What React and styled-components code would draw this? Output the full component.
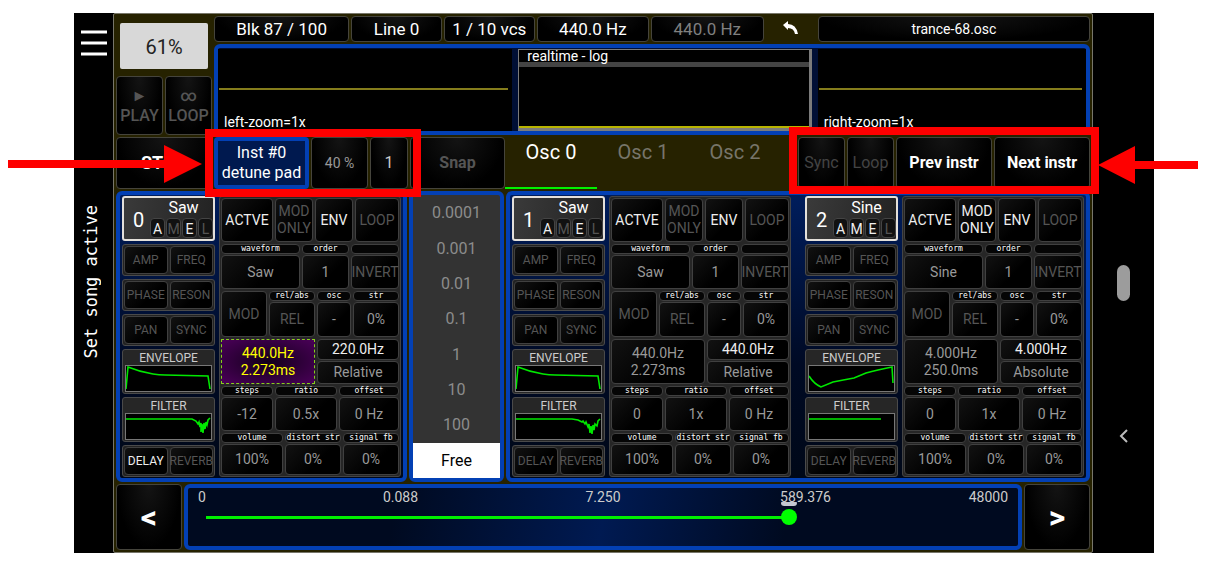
import React, { useState } from "react";
import styled, { createGlobalStyle } from "styled-components";

const GlobalStyle = createGlobalStyle`
  * {
    box-sizing: border-box;
  }
  body {
    margin: 0;
    background: #fff;
    font-family: Roboto, "Liberation Sans", sans-serif;
  }
  button {
    font-family: inherit;
    margin: 0;
    padding: 0;
    white-space: nowrap;
    cursor: pointer;
  }
`;

const Phone = styled.div`
  display: flex;
  margin: 13px 74px 14px;
  background: #000;
`;

const SideBar = styled.aside`
  display: flex;
  flex-direction: column;
  align-items: center;
  width: 39px;
  padding-top: 16px;
`;

const MenuButton = styled.button`
  border: none;
  background: none;
  height: 30px;
`;

const SideText = styled.div`
  margin-top: 146px;
  padding-left: 6px;
  writing-mode: vertical-rl;
  transform: rotate(180deg);
  color: #fff;
  font-family: "DejaVu Sans Mono", monospace;
  font-size: 17px;
  line-height: 20px;
  white-space: nowrap;
`;

const NavBar = styled.nav`
  display: flex;
  flex-direction: column;
  align-items: center;
  width: 61px;
  padding-top: 252px;
`;

const NavPill = styled.div`
  width: 13px;
  height: 36px;
  border-radius: 7px;
  background: #9c9c9c;
`;

const NavBack = styled.button`
  margin-top: 128px;
  border: none;
  background: none;
  height: 16px;
`;

const Main = styled.main`
  flex: 1;
  min-width: 0;
  display: flex;
  flex-direction: column;
  gap: 2px;
  padding: 2px;
  border: 1px solid #77766a;
  border-radius: 2px;
  background: #262200;
`;

const Row = styled.div`
  display: flex;
  gap: 2px;
`;

const Key = styled.button`
  flex: ${(p) => p.$grow || 0} 1 ${(p) => p.$w || 0}px;
  min-width: 0;
  height: ${(p) => p.$h || 52}px;
  border: 1px solid #45443c;
  border-radius: 4px;
  background: radial-gradient(ellipse at 50% 0%, #141414, #000 70%);
  color: ${(p) => p.$color || "#fff"};
  font-size: ${(p) => p.$size || 16}px;
  font-weight: ${(p) => p.$weight || 400};
  line-height: 20px;
`;

const InstKey = styled(Key)`
  border: 4px solid #0340b4;
  background: #00194f;
`;

const Transport = styled.div`
  flex: 0 0 96px;
  display: flex;
  flex-direction: column;
`;

const Load = styled.div`
  height: 46px;
  margin: 7px 4px;
  border-radius: 2px;
  background: #d8d8d8;
  color: #222;
  font-size: 20px;
  line-height: 48px;
  text-align: center;
`;

const Top = styled.div`
  flex: 1;
  min-width: 0;
  display: flex;
  flex-direction: column;
  gap: 2px;
`;

const UndoButton = styled.button`
  flex: 51 1 0;
  border: none;
  background: none;
`;

const Scopes = styled.div`
  display: grid;
  grid-template-columns: 294fr 293fr 268fr;
  gap: 6px;
  height: 91px;
  padding: 1px 0 0;
  border: 4px solid #0340b4;
  border-radius: 6px;
  background: #000f35;
`;

const Scope = styled.div`
  display: flex;
  flex-direction: column;
  justify-content: flex-end;
  padding: 0 4px 0 1px;
  background: #000;
  color: #fff;
  font-size: 14px;
  line-height: 18px;
`;

const Wave = styled.div`
  height: 2px;
  margin-bottom: 23px;
  background: #857d1c;
`;

const ScopeLabel = styled.div`
  padding-left: 5px;
`;

const Spectrum = styled.div`
  display: flex;
  flex-direction: column;
  justify-content: space-between;
  border: 2px solid #7b7b7b;
  border-width: 1px 3px 3px 1px;
  background: #000;
  color: #fff;
  font-size: 14px;
  line-height: 12px;
`;

const SpectrumTitle = styled.div`
  padding-left: 8px;
  border-bottom: 5px solid #444;
`;

const Floor = styled.div`
  height: 2px;
  background: #b8b400;
`;

const Marked = styled.div`
  position: relative;
  flex: 0 1 ${(p) => p.$w}px;
  display: flex;
  gap: 2px;
`;

/* red box and arrow lying over the toolbar */
const Callout = styled.div`
  position: absolute;
  inset: ${(p) => p.$inset};
  border: 8px solid #fe0000;
  pointer-events: none;
`;

const Arrow = styled.svg`
  position: absolute;
  top: ${(p) => p.$top}px;
  ${(p) => p.$side}: 100%;
  margin-${(p) => p.$side}: ${(p) => p.$gap}px;
`;

const Tabs = styled.div`
  flex: 1;
  display: flex;
  margin-left: -2px;
`;

const Tab = styled.button`
  width: 92px;
  height: 52px;
  padding-bottom: 20px;
  border: none;
  border-bottom: 2px solid ${(p) => (p.$on ? "#00f000" : "transparent")};
  background: none;
  color: ${(p) => (p.$on ? "#fff" : "#77756a")};
  font-size: 20px;
`;

const Deck = styled.div`
  display: grid;
  grid-template-columns: 291fr 95fr 584fr;
  gap: 2px;
`;

const Panel = styled.section`
  min-width: 0;
  display: flex;
  gap: 14px;
  padding: 1px 2px;
  border: 4px solid #0340b4;
  border-radius: 6px;
  background: linear-gradient(#001d5c, #000a24 60%, #000818);
`;

const Picker = styled.div`
  display: flex;
  flex-direction: column;
  border: 4px solid #0340b4;
  border-radius: 6px;
  background: #333;
`;

const PickerItem = styled.button`
  flex: 1;
  border: none;
  background: ${(p) => (p.$on ? "#fff" : "none")};
  color: ${(p) => (p.$on ? "#000" : "#8c8c8c")};
  font-size: 16px;
  line-height: 20px;
  padding-top: 1px;
`;

const OscBox = styled.div`
  flex: 1;
  min-width: 0;
  display: grid;
  grid-template-columns: 93fr 182fr;
  gap: 4px;
`;

const LeftCol = styled.div`
  min-width: 0;
  display: flex;
  flex-direction: column;
  gap: 3px;
`;

const OscHead = styled.div`
  display: flex;
  height: 45px;
  border: 2px solid #e4e0da;
  border-radius: 3px;
  background: linear-gradient(100deg, #3a3a3a, #222);
  color: #fff;
`;

const OscNumber = styled.div`
  flex: 1;
  padding-left: 3px;
  text-align: center;
  font-size: 20px;
  line-height: 44px;
`;

const OscInfo = styled.div`
  width: 63px;
  font-size: 16px;
  line-height: 20px;
  text-align: center;
`;

const OscName = styled.div`
  padding-left: 4px;
`;

const Flags = styled.div`
  display: flex;
  gap: 1px;
`;

const Flag = styled.span`
  flex: 1;
  height: 20px;
  border: 1px solid #444;
  border-radius: 4px;
  background: #111;
  color: ${(p) => (p.$on ? "#eee" : "#555")};
  font-size: 14px;
  line-height: 20px;
`;

const Pair = styled.div`
  display: grid;
  grid-template-columns: 1fr 1fr;
  gap: 2px;
  height: 32px;
  padding: 1px;
  border: 1px solid #4a4a4a;
  border-radius: 3px;
  background: #222;
`;

const tones = { hi: "#eee", mid: "#999", low: "#555" };

const Cell = styled.button`
  display: flex;
  align-items: center;
  justify-content: center;
  min-width: 0;
  border: 1px solid #404040;
  border-radius: 4px;
  background: linear-gradient(135deg, #121212, #000 60%);
  color: ${(p) => tones[p.$tone || "mid"]};
  font-size: ${(p) => p.$size || 14}px;
  line-height: 17px;
`;

const HotCell = styled(Cell)`
  border: 1px dashed #86d01c;
  border-radius: 0;
  background: radial-gradient(ellipse, #12001a, #4a0058);
  color: #ffff00;
`;

const Graph = styled.div`
  height: 45px;
  padding: 1px 2px 2px;
  border: 1px solid #4a4a4a;
  border-radius: 3px;
  background: #262626;
  color: #ccc;
  font-size: 12px;
  line-height: 14px;
  text-align: center;
`;

const Plot = styled.svg`
  display: block;
  width: 100%;
  height: 27px;
  border: 1px solid #777;
  background: #000;
`;

const Controls = styled.div`
  min-width: 0;
  display: grid;
  grid-template-rows: 44px 45px 46px 45px 45px 42px;
  gap: 2px;
  padding: 1px;
  border: 1px solid #444;
  border-radius: 3px;
  background: #262626;
`;

const Line = styled.div`
  display: grid;
  grid-template-columns: ${(p) => p.$cols};
  gap: 2px;
`;

const Stack = styled.div`
  min-width: 0;
  display: grid;
  grid-template-rows: ${(p) => p.$rows || "10px 1fr"};
  gap: 1px;
`;

const Caption = styled.div`
  display: flex;
  align-items: center;
  justify-content: center;
  border: 1px solid #404040;
  border-radius: 4px;
  background: #050505;
  color: #fff;
  font-family: "DejaVu Sans Mono", monospace;
  font-size: 8px;
  line-height: 8px;
  white-space: nowrap;
`;

const SliderBox = styled.div`
  flex: 1;
  padding: 0 10px;
  border: 4px solid #0340b4;
  border-radius: 6px;
  background: linear-gradient(100deg, #000a20 25%, #001a52 50%, #000a20 72%);
`;

const Ticks = styled.div`
  display: grid;
  grid-template-columns: 1fr 2fr 2fr 2fr 1fr;
  color: #ccc;
  font-size: 14px;
  line-height: 18px;
  text-align: center;

  span:first-child {
    text-align: left;
  }
  span:last-child {
    text-align: right;
  }
`;

const Track = styled.div`
  position: relative;
`;

const Cap = styled.span`
  position: absolute;
  top: -4px;
  width: 16px;
  height: 4px;
  border-radius: 2px 2px 8px 8px;
  background: #c4c8d0;
`;

const Range = styled.input`
  display: block;
  width: 100%;
  height: 22px;
  margin: 0;
  appearance: none;
  background: linear-gradient(#00f000, #00f000) 8px 50% / var(--fill) 3px no-repeat;

  &::-webkit-slider-thumb {
    appearance: none;
    width: 16px;
    height: 16px;
    border-radius: 50%;
    background: #00ff00;
  }
`;

const ENV_SAW = "M0 23 L2 1 Q14 6 27 8 Q33 9 39 9 L82 10 L84 23";
const ENV_SINE = "M0 10 Q5 18 12 21 L24 16 Q34 14 45 12 L57 7 Q68 4 83 1 L84 17";
const FILTER_A =
  "M0 5 H66 L70 7 72 10 73 8 74 13 75 9 75 18 76 10 77 19 78 9 79 15 80 8 81 11 82 6 84 4";
const FILTER_B =
  "M0 5 H56 L62 6 66 8 67 7 69 10 70 8 72 13 73 10 74 19 75 12 76 20 77 11 78 16 79 10 81 12 82 7 84 5";

const oscs = [
  {
    name: "Saw",
    flags: "AE",
    delay: true,
    hot: true,
    hz: "440.0Hz",
    ms: "2.273ms",
    base: "220.0Hz",
    mode: "Relative",
    steps: "-12",
    ratio: "0.5x",
    env: ENV_SAW,
    filter: FILTER_A,
  },
  {
    name: "Saw",
    flags: "AE",
    hz: "440.0Hz",
    ms: "2.273ms",
    base: "440.0Hz",
    mode: "Relative",
    steps: "0",
    ratio: "1x",
    env: ENV_SAW,
    filter: FILTER_B,
  },
  {
    name: "Sine",
    flags: "AME",
    hz: "4.000Hz",
    ms: "250.0ms",
    base: "4.000Hz",
    mode: "Absolute",
    steps: "0",
    ratio: "1x",
    env: ENV_SINE,
    filter: "M0 5 H72",
  },
];

const Field = ({ label, tone, children }) => (
  <Stack>
    <Caption>{label}</Caption>
    <Cell $tone={tone} aria-label={label}>
      {children}
    </Cell>
  </Stack>
);

const PlotBox = ({ title, d }) => (
  <Graph>
    {title}
    <Plot viewBox="0 0 85 25" preserveAspectRatio="none">
      <path d={d} fill="none" stroke="#00e800" strokeWidth="1.6" />
    </Plot>
  </Graph>
);

const Osc = ({ index }) => {
  const o = oscs[index];
  const Freq = o.hot ? HotCell : Cell;

  return (
    <OscBox>
      <LeftCol>
        <OscHead>
          <OscNumber>{index}</OscNumber>
          <OscInfo>
            <OscName>{o.name}</OscName>
            <Flags>
              {["A", "M", "E", "L"].map((f) => (
                <Flag key={f} $on={o.flags.includes(f)}>
                  {f}
                </Flag>
              ))}
            </Flags>
          </OscInfo>
        </OscHead>
        {[
          ["AMP", "FREQ"],
          ["PHASE", "RESON"],
          ["PAN", "SYNC"],
        ].map(([a, b]) => (
          <Pair key={a}>
            <Cell $tone="low" $size={12}>{a}</Cell>
            <Cell $tone="low" $size={12}>{b}</Cell>
          </Pair>
        ))}
        <PlotBox title="ENVELOPE" d={o.env} />
        <PlotBox title="FILTER" d={o.filter} />
        <Pair>
          <Cell $tone={o.delay ? "hi" : "low"} $size={12}>DELAY</Cell>
          <Cell $tone="low" $size={12}>REVERB</Cell>
        </Pair>
      </LeftCol>
      <Controls>
        <Line $cols="52fr 38fr 38fr 44fr">
          <Cell $tone="hi">ACTVE</Cell>
          <Cell $tone={o.flags.includes("M") ? "hi" : "low"}>
            MOD
            <br />
            ONLY
          </Cell>
          <Cell $tone="hi">ENV</Cell>
          <Cell $tone="low">LOOP</Cell>
        </Line>
        <Line $cols="79fr 47fr 48fr">
          <Field label="waveform">{o.name}</Field>
          <Field label="order">1</Field>
          <Field tone="low">INVERT</Field>
        </Line>
        <Line $cols="46fr 46fr 34fr 46fr">
          <Cell $tone="low">MOD</Cell>
          <Field label="rel/abs" tone="low">REL</Field>
          <Field label="osc">-</Field>
          <Field label="str">0%</Field>
        </Line>
        <Line $cols="94fr 82fr">
          <Freq>
            {o.hz}
            <br />
            {o.ms}
          </Freq>
          <Stack $rows="21px 1fr">
            <Cell $tone="hi">{o.base}</Cell>
            <Cell>{o.mode}</Cell>
          </Stack>
        </Line>
        <Line $cols="52fr 62fr 60fr">
          <Field label="steps">{o.steps}</Field>
          <Field label="ratio">{o.ratio}</Field>
          <Field label="offset">0 Hz</Field>
        </Line>
        <Line $cols="62fr 56fr 56fr">
          <Field label="volume">100%</Field>
          <Field label="distort str">0%</Field>
          <Field label="signal fb">0%</Field>
        </Line>
      </Controls>
    </OscBox>
  );
};

const App = () => {
  const [tab, setTab] = useState(0);
  const [step, setStep] = useState("Free");
  const [value, setValue] = useState(734);

  return (
    <Phone>
      <GlobalStyle />
      <SideBar>
        <MenuButton aria-label="Menu">
          <svg width="26" height="26" viewBox="0 0 26 26">
            <path d="M0 2h26M0 13h26M0 24h26" stroke="#fff" strokeWidth="3" />
          </svg>
        </MenuButton>
        <SideText>Set song active</SideText>
      </SideBar>

      <Main>
        <Row>
          <Transport>
            <Load>61%</Load>
            <Row>
              <Key $grow={1} $h={59} $color="#555" $weight={500}>
                ►<br />
                PLAY
              </Key>
              <Key $grow={1} $h={59} $color="#555" $weight={500}>
                ∞<br />
                LOOP
              </Key>
            </Row>
          </Transport>
          <Top>
            <Row>
              <Key $grow={135} $h={26} $size={17}>Blk 87 / 100</Key>
              <Key $grow={90} $h={26} $size={17}>Line 0</Key>
              <Key $grow={90} $h={26} $size={17}>1 / 10 vcs</Key>
              <Key $grow={112} $h={26} $size={17}>440.0 Hz</Key>
              <Key $grow={112} $h={26} $size={17} $color="#808080">440.0 Hz</Key>
              <UndoButton aria-label="Undo">
                <svg width="16" height="14" viewBox="0 0 16 14">
                  <path d="M5 0 V3 Q13 3 15 13 H12 Q11 7 5 7 V9 L0 4 Z" fill="#fff" />
                </svg>
              </UndoButton>
              <Key $grow={274} $h={26} $size={14}>trance-68.osc</Key>
            </Row>
            <Scopes>
              <Scope>
                <Wave />
                <ScopeLabel>left-zoom=1x</ScopeLabel>
              </Scope>
              <Spectrum>
                <SpectrumTitle>realtime - log</SpectrumTitle>
                <Floor />
              </Spectrum>
              <Scope>
                <Wave />
                <ScopeLabel>right-zoom=1x</ScopeLabel>
              </Scope>
            </Scopes>
          </Top>
        </Row>

        <Row>
          <Key $w={96} $size={18} $weight={700}>STOP</Key>
          <Marked $w={194}>
            <InstKey $w={95}>
              Inst #0
              <br />
              detune pad
            </InstKey>
            <Key $w={57} $size={14} $color="#999">40 %</Key>
            <Key $w={38} $color="#ccc">1</Key>
            <Callout $inset="-8px -13px -8px -9px">
              <Arrow $side="right" $top={8} $gap={11} width="194" height="38">
                <path d="M0 15h156V0l38 19-38 19V23H0z" fill="#fe0000" />
              </Arrow>
            </Callout>
          </Marked>
          <Key $w={95} $weight={700} $color="#555">Snap</Key>
          <Tabs role="tablist">
            {[0, 1, 2].map((n) => (
              <Tab key={n} role="tab" $on={tab === n} onClick={() => setTab(n)}>
                Osc {n}
              </Tab>
            ))}
          </Tabs>
          <Marked $w={292}>
            <Key $w={47} $color="#444">Sync</Key>
            <Key $w={47} $color="#444">Loop</Key>
            <Key $w={96} $weight={700}>Prev instr</Key>
            <Key $w={96} $weight={700}>Next instr</Key>
            <Callout $inset="-10px -9px -5px -9px">
              <Arrow $side="left" $top={11} $gap={7} width="100" height="38">
                <path d="M100 15H37V0L0 19l37 19V23h63z" fill="#fe0000" />
              </Arrow>
            </Callout>
          </Marked>
        </Row>

        <Deck>
          <Panel>
            <Osc index={0} />
          </Panel>
          <Picker>
            {["0.0001", "0.001", "0.01", "0.1", "1", "10", "100", "Free"].map((s) => (
              <PickerItem key={s} $on={step === s} onClick={() => setStep(s)}>
                {s}
              </PickerItem>
            ))}
          </Picker>
          <Panel>
            <Osc index={1} />
            <Osc index={2} />
          </Panel>
        </Deck>

        <Row>
          <Key $w={66} $h={66} $size={32} $weight={700}>&lt;</Key>
          <SliderBox>
            <Ticks>
              <span>0</span>
              <span>0.088</span>
              <span>7.250</span>
              <span>589.376</span>
              <span>48000</span>
            </Ticks>
            <Track>
              <Cap style={{ left: `calc((100% - 16px) * ${value / 1000})` }} />
              <Range
                type="range"
                min="0"
                max="1000"
                aria-label="Frequency"
                value={value}
                onChange={(e) => setValue(Number(e.target.value))}
                style={{ "--fill": `calc((100% - 16px) * ${value / 1000})` }}
              />
            </Track>
          </SliderBox>
          <Key $w={66} $h={66} $size={32} $weight={700}>&gt;</Key>
        </Row>
      </Main>

      <NavBar>
        <NavPill />
        <NavBack aria-label="Back">
          <svg width="10" height="14" viewBox="0 0 10 14">
            <path d="M8 1 L2 7 L8 13" fill="none" stroke="#bbb" strokeWidth="2" />
          </svg>
        </NavBack>
      </NavBar>
    </Phone>
  );
};

export default App;
